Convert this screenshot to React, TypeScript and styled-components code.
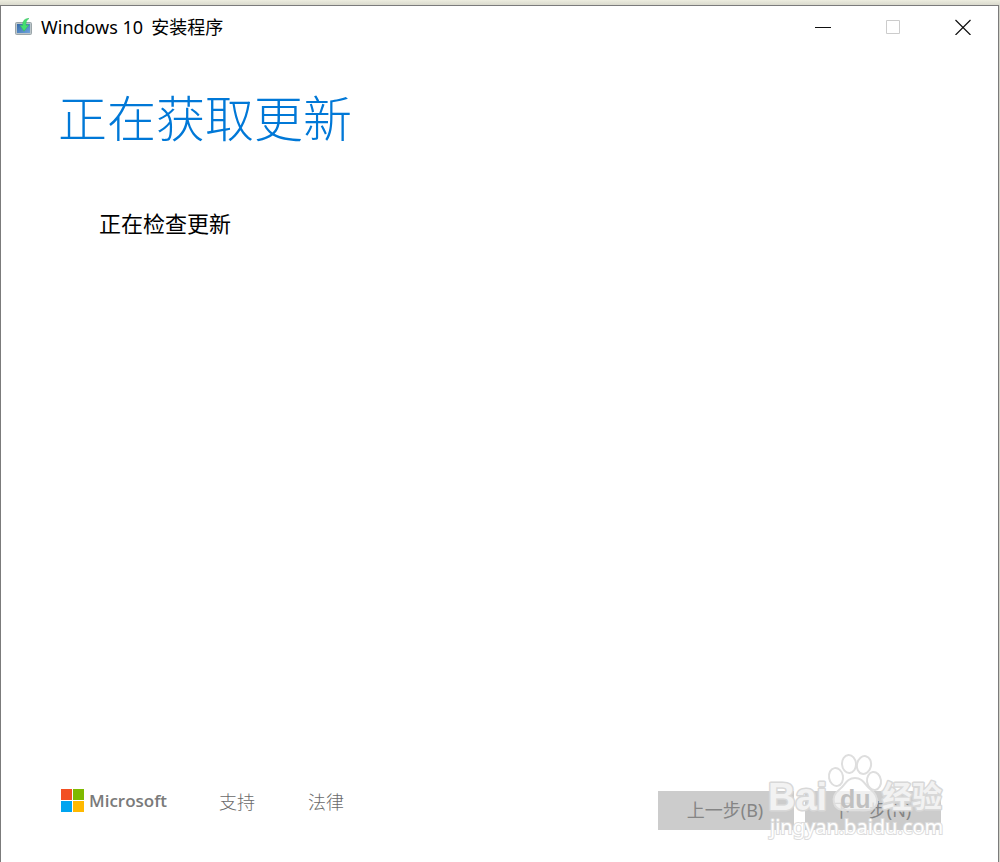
import React from "react";
import styled, { createGlobalStyle } from "styled-components";

const GlobalStyle = createGlobalStyle`
  *, *::before, *::after { box-sizing: border-box; }
  body {
    margin: 0;
    background: #ebebdf;
    font-family: "Noto Sans", "Noto Sans CJK SC", sans-serif;
    color: #000;
  }
`;

const Desktop = styled.div`
  display: flex;
  flex-direction: column;
  min-height: 100vh;
  padding: 5px 1px 0 0;
  background: linear-gradient(#ededdf, #dadace 5px, #d2d2c8 6px);
`;

const Window = styled.div`
  flex: 1;
  display: flex;
  flex-direction: column;
  background: #fff;
  border: 1px solid #7b7b7b;
  border-bottom: 0;
`;

const TitleBar = styled.header`
  display: flex;
  align-items: center;
  height: 42px;
  padding-left: 13px;
`;

const AppTitle = styled.span`
  flex: 1;
  display: flex;
  gap: 8px;
  padding-left: 7px;
  font-size: 18px;
  line-height: 24px;
`;

const CaptionButton = styled.button`
  display: grid;
  place-items: center;
  width: 70px;
  height: 42px;
  padding: 0;
  border: 0;
  background: none;
  color: #111;
  &:disabled { color: #ccc; }
`;

const Main = styled.main`
  flex: 1;
  padding: 32px 57px 0;
`;

const Heading = styled.h1`
  margin: 0;
  font-family: "Noto Sans CJK SC", sans-serif;
  font-size: 49px;
  line-height: 72px;
  font-weight: 300;
  color: #0078d7;
`;

const Status = styled.p`
  margin: 54px 0 0 41px;
  font-family: "Noto Sans CJK SC", sans-serif;
  font-size: 22px;
  line-height: 32px;
`;

const Footer = styled.footer`
  display: flex;
  align-items: flex-start;
  padding: 0 57px 32px 60px;
`;

const Brand = styled.div`
  display: flex;
  align-items: center;
  gap: 5px;
  width: 158px;
  height: 18px;
  font-family: "Open Sans", sans-serif;
  font-size: 17px;
  font-weight: 600;
  color: #7a7a7a;
`;

const FooterLink = styled.a`
  margin-right: 53px;
  font-family: "Noto Sans CJK SC", sans-serif;
  font-size: 18px;
  line-height: 20px;
  font-weight: 300;
  color: #6a6a6a;
  text-decoration: none;
`;

const Actions = styled.div`
  position: relative;
  display: flex;
  gap: 11px;
  margin-left: auto;
`;

const StepButton = styled.button`
  width: 136px;
  height: 39px;
  padding: 0 2px 4px 0;
  border: 0;
  background: #ccc;
  font-family: "Noto Sans", "Noto Sans CJK SC", sans-serif;
  font-size: 18px;
  color: #858585;
`;

const Watermark = styled.svg`
  position: absolute;
  right: -12px;
  bottom: -14px;
  pointer-events: none;
`;

function SetupIcon() {
  return (
    <svg width="20" height="20" viewBox="0 0 20 20" aria-hidden="true">
      <defs>
        <linearGradient id="screen" x1="0" y1="0" x2="1" y2="1">
          <stop offset="0" stopColor="#3569a8" />
          <stop offset="1" stopColor="#6fa3dc" />
        </linearGradient>
      </defs>
      <rect x="1.5" y="5.5" width="16" height="12" rx="1" fill="#bcc6ca" stroke="#9aa5a9" />
      <rect x="3" y="7" width="13" height="9" fill="url(#screen)" />
      <path d="M15 1.500C10.500 1.500 8.500 4 8.700 8.500L6 8.200l4 6 4.800-6.200-2.800.3C11.700 5 12.500 3 15 1.500z" fill="#45e070" stroke="#35b85a" strokeWidth=".5" />
    </svg>
  );
}

function MicrosoftMark() {
  return (
    <svg width="23" height="23" viewBox="0 0 23 23" aria-hidden="true">
      <path fill="#f25022" d="M0 0h11v11H0z" />
      <path fill="#7fba00" d="M12 0h11v11H12z" />
      <path fill="#00a4ef" d="M0 12h11v11H0z" />
      <path fill="#ffb900" d="M12 12h11v11H12z" />
    </svg>
  );
}

function BaiduWatermark() {
  return (
    <Watermark width="188" height="94" viewBox="0 0 188 94" role="img" aria-label="Baidu">
      <g fill="#fff" fillOpacity=".7" stroke="#dedede" strokeWidth="2">
        <ellipse cx="84" cy="14" rx="7" ry="9" transform="rotate(-4 84 14)" />
        <ellipse cx="99" cy="15" rx="7" ry="9" transform="rotate(12 99 15)" />
        <ellipse cx="71" cy="27" rx="7" ry="9" transform="rotate(-10 71 27)" />
        <ellipse cx="109" cy="31" rx="7" ry="9" transform="rotate(-8 109 31)" />
        <path d="M90 28c-8 0-10 7-15 11-4 3-8 7-6 14 2 8 10 8 21 7 11 1 20 1 22-7 1-7-3-11-7-14-5-4-7-11-15-11z" />
      </g>
      <g fill="#f2f2f2" stroke="#d8d8d8" strokeWidth="3" paintOrder="stroke" strokeLinejoin="round" fontWeight="700">
        <text x="3" y="60" fontFamily="Liberation Sans, sans-serif" fontSize="38">Bai</text>
        <text x="117" y="57" fontFamily="Noto Sans CJK SC, sans-serif" fontSize="30">经验</text>
      </g>
      <text x="75" y="58" fontFamily="Liberation Sans, sans-serif" fontSize="25" fontWeight="700" fill="#c0c0c0">du</text>
      <text x="5" y="84" fontFamily="Noto Sans, sans-serif" fontSize="20" fill="#fff" stroke="#dcdcdc" strokeWidth="2" paintOrder="stroke">jingyan.baidu.com</text>
    </Watermark>
  );
}

export default function App() {
  return (
    <>
      <GlobalStyle />
      <Desktop>
        <Window>
          <TitleBar>
            <SetupIcon />
            <AppTitle>
              <span>Windows 10</span>
              <span>安装程序</span>
            </AppTitle>
            <CaptionButton aria-label="最小化">
              <svg width="16" height="16" viewBox="0 0 16 16"><path d="M0 8.500h16" stroke="currentColor" /></svg>
            </CaptionButton>
            <CaptionButton aria-label="最大化" disabled>
              <svg width="16" height="16" viewBox="0 0 16 16"><path d="M1.500 1.500h13v13h-13z" fill="none" stroke="currentColor" /></svg>
            </CaptionButton>
            <CaptionButton aria-label="关闭">
              <svg width="16" height="16" viewBox="0 0 16 16"><path d="M.5 1l15 15M15.500 1l-15 15" stroke="currentColor" strokeWidth="1.200" /></svg>
            </CaptionButton>
          </TitleBar>
          <Main>
            <Heading>正在获取更新</Heading>
            <Status role="status">正在检查更新</Status>
          </Main>
          <Footer>
            <Brand>
              <MicrosoftMark />
              Microsoft
            </Brand>
            <FooterLink href="#support">支持</FooterLink>
            <FooterLink href="#legal">法律</FooterLink>
            <Actions>
              <StepButton disabled>上一步(B)</StepButton>
              <StepButton disabled>下一步(N)</StepButton>
              <BaiduWatermark />
            </Actions>
          </Footer>
        </Window>
      </Desktop>
    </>
  );
}
